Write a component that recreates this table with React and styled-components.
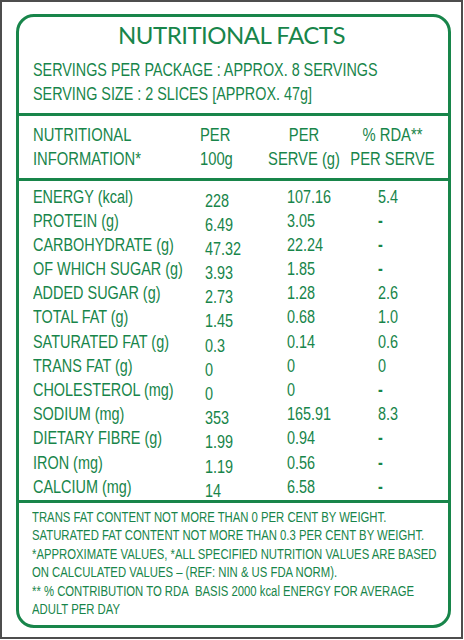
import React from 'react'
import styled, { createGlobalStyle } from 'styled-components'

const GREEN = '#18854a'
// the label uses a narrow grotesque; Arial metrics squeezed to Arial Narrow widths
const NARROW = 0.82
const n = px => `${(px / NARROW).toFixed(2)}px`

const GlobalStyle = createGlobalStyle`
  html, body {
    margin: 0;
    padding: 0;
    background: #ffffff;
  }
  * {
    box-sizing: border-box;
  }
`

const Frame = styled.div`
  width: 463px;
  border: 2px solid #4d4d4d;
  padding: 12px 10px 9px 14px;
  background: #fff;
  color: ${GREEN};
  font-family: 'Liberation Sans', Arial, sans-serif;
`

const Panel = styled.div`
  border: 3px solid ${GREEN};
  border-radius: 18px;
  overflow: hidden;
`

const Section = styled.div`
  padding: ${p => p.$pad};
  border-top: ${p => (p.$first ? 'none' : `3px solid ${GREEN}`)};
`

const Condensed = styled.div`
  width: ${100 / NARROW}%;
  margin-left: ${p => p.$indent || 0}px;
  transform: scaleX(${NARROW});
  transform-origin: left top;
`

const Title = styled.h1`
  margin: 0 0 8px;
  font-family: 'Lato', 'Liberation Sans', sans-serif;
  font-weight: 400;
  font-size: 24px;
  letter-spacing: -0.5px;
  line-height: 30px;
  text-align: center;
`

const Line = styled.div`
  font-size: 17.5px;
  line-height: 24px;
  white-space: nowrap;
`

const HeadGrid = styled.div`
  display: grid;
  grid-template-columns: ${n(167)} ${n(64)} ${n(80)} ${n(97)};
  font-size: 18px;
  line-height: 24px;
  white-space: nowrap;
`

const HeadCell = styled.div`
  text-align: ${p => p.$align || 'left'};
`

const Row = styled.div`
  display: grid;
  grid-template-columns: ${n(172)} ${n(82)} ${n(91)} 1fr;
  font-size: 17.6px;
  line-height: 24.2px;
  height: 24.2px;
  white-space: nowrap;
`

const Cell = styled.div`
  padding-top: ${p => p.$drop || 0}px;
  font-weight: ${p => (p.$dash ? 700 : 400)};
`

const Note = styled.p`
  margin: 0;
  font-size: 13.8px;
  line-height: 18.4px;
  white-space: nowrap;
`

const rows = [
  ['ENERGY (kcal)', '228', '107.16', '5.4'],
  ['PROTEIN (g)', '6.49', '3.05', '-'],
  ['CARBOHYDRATE (g)', '47.32', '22.24', '-'],
  ['OF WHICH SUGAR (g)', '3.93', '1.85', '-'],
  ['ADDED SUGAR (g)', '2.73', '1.28', '2.6'],
  ['TOTAL FAT (g)', '1.45', '0.68', '1.0'],
  ['SATURATED FAT (g)', '0.3', '0.14', '0.6'],
  ['TRANS FAT (g)', '0', '0', '0'],
  ['CHOLESTEROL (mg)', '0', '0', '-'],
  ['SODIUM (mg)', '353', '165.91', '8.3'],
  ['DIETARY FIBRE (g)', '1.99', '0.94', '-'],
  ['IRON (mg)', '1.19', '0.56', '-'],
  ['CALCIUM (mg)', '14', '6.58', '-'],
]

export default function App() {
  return (
    <>
      <GlobalStyle />
      <Frame>
        <Panel>
          <Section $first $pad="3px 4px 7px 0">
            <Title>NUTRITIONAL FACTS</Title>
            <Condensed $indent={14}>
              <Line>SERVINGS PER PACKAGE : APPROX. 8 SERVINGS</Line>
              <Line>SERVING SIZE : 2 SLICES [APPROX. 47g]</Line>
            </Condensed>
          </Section>

          <Section $pad="6.5px 0 7.5px 14px">
            <Condensed>
              <HeadGrid>
                <HeadCell>NUTRITIONAL</HeadCell>
                <HeadCell>PER</HeadCell>
                <HeadCell $align="center">PER</HeadCell>
                <HeadCell $align="center">% RDA**</HeadCell>
                <HeadCell>INFORMATION*</HeadCell>
                <HeadCell>100g</HeadCell>
                <HeadCell $align="center">SERVE (g)</HeadCell>
                <HeadCell $align="center">PER SERVE</HeadCell>
              </HeadGrid>
            </Condensed>
          </Section>

          <Section $pad="3.5px 0 1px 14px">
            <Condensed>
              {rows.map(r => (
                <Row key={r[0]}>
                  <Cell>{r[0]}</Cell>
                  <Cell $drop={4}>{r[1]}</Cell>
                  <Cell>{r[2]}</Cell>
                  <Cell $dash={r[3] === '-'}>{r[3]}</Cell>
                </Row>
              ))}
            </Condensed>
          </Section>

          <Section $pad="6px 0 5.6px 13px">
            <Condensed>
              <Note>TRANS FAT CONTENT NOT MORE THAN 0 PER CENT BY WEIGHT.</Note>
              <Note>SATURATED FAT CONTENT NOT MORE THAN 0.3 PER CENT BY WEIGHT.</Note>
              <Note>
                *APPROXIMATE VALUES, *ALL SPECIFIED NUTRITION VALUES ARE BASED
                <br />
                ON CALCULATED VALUES – (REF: NIN &amp; US FDA NORM).
              </Note>
              <Note>
                ** % CONTRIBUTION TO RDA&nbsp; BASIS 2000 kcal ENERGY FOR AVERAGE
                <br />
                ADULT PER DAY
              </Note>
            </Condensed>
          </Section>
        </Panel>
      </Frame>
    </>
  )
}
